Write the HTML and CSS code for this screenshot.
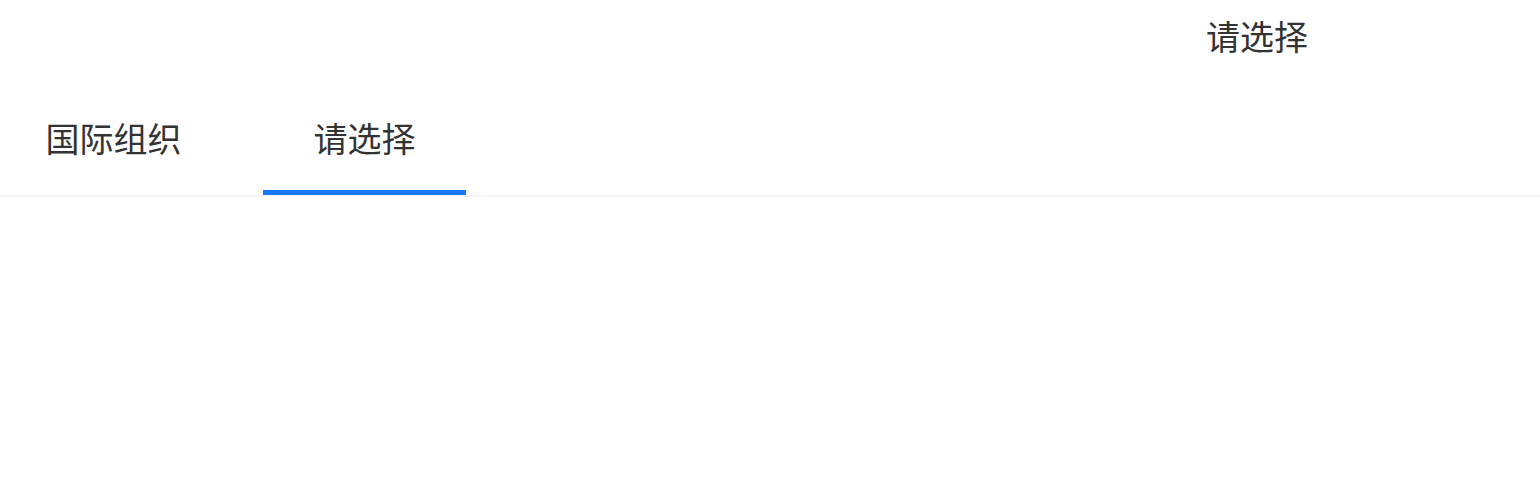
FILE: index.html
```html
<!DOCTYPE html>
<html lang="zh">
<head>
<meta charset="utf-8">
<link rel="stylesheet" href="styles.css">
</head>
<body>
<div class="header"><span class="title">请选择</span></div>
<div class="tabs">
  <div class="tab"><span class="tab-text">国际组织</span></div>
  <div class="tab active"><span class="tab-text">请选择</span></div>
</div>
</body>
</html>
```
FILE: styles.css
```css
* { box-sizing: border-box; }
body {
  margin: 0;
  background: #fff;
  font-family: "Noto Sans CJK SC", "Noto Sans", sans-serif;
  color: #333;
}
.header {
  height: 78px;
  display: flex;
  justify-content: flex-end;
  align-items: flex-start;
  padding-top: 14px;
  padding-right: 232px;
  font-size: 34px;
}
.title { line-height: 44px; }
.tabs {
  display: flex;
  padding-left: 12px;
  gap: 48px;
  border-bottom: 2px solid #f5f5f5;
}
.tab {
  width: 203px;
  height: 117px;
  padding-top: 38px;
  display: flex;
  justify-content: center;
  font-size: 34px;
  position: relative;
}
.tab-text { line-height: 44px; }
.tab.active::after {
  content: "";
  position: absolute;
  left: 0;
  right: 0;
  bottom: 0;
  height: 5px;
  background: #1677ff;
}
```
